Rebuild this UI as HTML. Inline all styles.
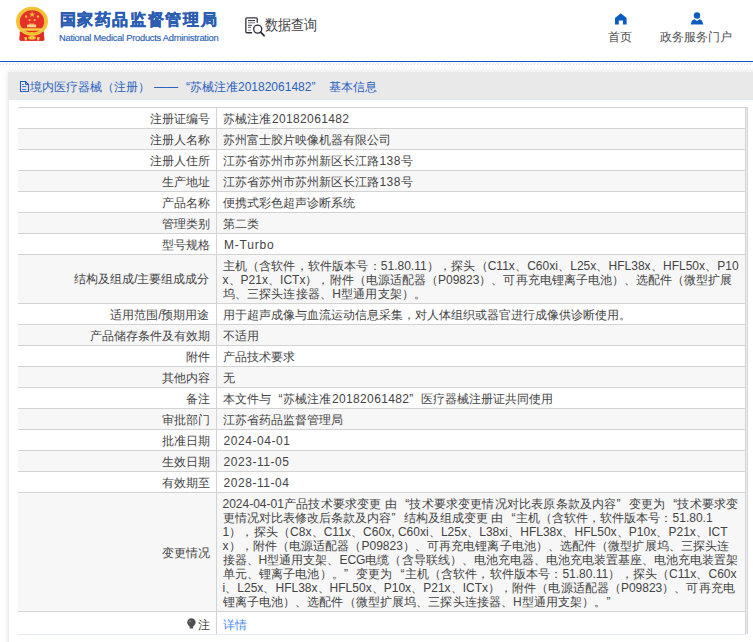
<!DOCTYPE html>
<html><head><meta charset="utf-8">
<style>
*{margin:0;padding:0;box-sizing:border-box}
html,body{width:753px;height:642px;overflow:hidden;background:#fff}
body{position:relative;font-family:"Liberation Sans",sans-serif;color:#555}
.abs{position:absolute;white-space:nowrap}
#title{left:59.5px;top:9.8px;font-size:15.8px;font-weight:bold;color:#2b5db3;-webkit-text-stroke:0.45px #2b5db3;letter-spacing:1.65px;line-height:20px}
#sub{left:59px;top:32.5px;font-size:9.3px;letter-spacing:-0.24px;color:#2c5fb6;-webkit-text-stroke:0.15px #2c5fb6;line-height:11px}
#dq{left:265px;top:16px;font-size:15px;transform:scaleX(0.875);transform-origin:0 0;color:#444;line-height:18px}
.nav{font-size:12px;color:#4a4a4a;line-height:14px}
#line{left:0;top:61px;width:753px;height:1px;background:#0a5cc2}
#panel{left:8px;top:72px;width:760px;height:600px;background:#fff;box-shadow:0 0 6px rgba(0,0,0,.12)}
#phead{left:0;top:0;width:100%;height:28px;background:#e9e9e9;border-bottom:1px solid #e4e8f3}
.pt{left:22px;top:7px;font-size:12px;color:#2b62c0;line-height:16px}
table{position:absolute;left:10px;top:35px;border-collapse:collapse;width:728px;font-size:12px;line-height:14px;color:#444}
td{border:1px solid #d3d3d3;padding:4px 0 2px;vertical-align:middle}
td.l{text-align:right;width:198px;padding-right:6px;border-left:none}
td.v{padding-left:6px;white-space:nowrap}
tr:nth-child(even) td{background:#f7f7f7}
.ln{white-space:nowrap;text-align-last:justify}
.qo{display:inline-block;width:12px;text-align:right;text-align-last:right}
.qc{display:inline-block;width:12px;text-align:left;text-align-last:left}
tr.last td{height:23px;padding-top:5px;padding-bottom:1px;border-bottom-color:#e6eaf5}
#rb1{left:738px;top:35px;width:1px;height:527px;background:#eceef4}
#rb2{left:739px;top:35px;width:1px;height:527px;background:#d4d4d8}
#tb{left:730px;top:35px;width:10px;height:1px;background:#d3d3d3}
</style></head><body>

<svg class="abs" style="left:0;top:0" width="60" height="45" viewBox="0 0 60 45">
 <path d="M19.8 31.5 L19.6 39.5 Q19.8 40.8 21.5 40.8 L42.5 40.8 Q44.2 40.8 44.2 39.5 L43.8 31.5Z" fill="#e42a24"/>
 <ellipse cx="32" cy="21.3" rx="16" ry="14.6" fill="#f4c234"/>
 <ellipse cx="32" cy="21.4" rx="12.2" ry="11.2" fill="#e6302a"/>
 <path d="M21 28.3H43V30.7H21Z" fill="#f7d044"/>
 <path d="M27 24.6H36.2V27.3H27Z" fill="#f6d985"/>
 <path d="M29 23.6H34.2V24.8H29Z" fill="#f2c86a"/>
 <ellipse cx="32" cy="33.6" rx="2.2" ry="1.5" fill="#f4c234"/>
 <path d="M19.6 36 L44.2 36 L44.2 39.5 Q44.2 40.8 42.5 40.8 L21.5 40.8 Q19.6 40.8 19.6 39.5Z" fill="#e42a24"/>
 <ellipse cx="32" cy="37.8" rx="3.8" ry="1.9" fill="#f4c83c"/>
 <path d="M24.3 37 L27.2 37.6 L26.5 40.5 L25 40.5Z M39.7 37 L36.8 37.6 L37.5 40.5 L39 40.5Z" fill="#f6d45a"/>
 <path d="M32.1 11.6L32.9 13.5L35 13.6L33.4 14.9L34 16.9L32.1 15.8L30.2 16.9L30.8 14.9L29.2 13.6L31.3 13.5Z" fill="#f4c234"/>
 <circle cx="26.1" cy="16.5" r="1.2" fill="#f4c234"/>
 <circle cx="38" cy="16.5" r="1.2" fill="#f4c234"/>
 <circle cx="29.6" cy="20.1" r="1.1" fill="#f4c234"/>
 <circle cx="34.6" cy="20.1" r="1.1" fill="#f4c234"/>
</svg>
<div id="title" class="abs">国家药品监督管理局</div>
<div id="sub" class="abs">National Medical Products Administration</div>

<svg class="abs" style="left:242px;top:14px" width="26" height="24" viewBox="0 0 26 24">
 <path d="M10.1 18.75H4.85Q3.85 18.75 3.85 17.75V4.85Q3.85 3.85 4.85 3.85H14.25Q15.25 3.85 15.25 4.85V8.8" fill="none" stroke="#33333f" stroke-width="1.3"/>
 <path d="M6 6.5H13" stroke="#3a3a48" stroke-width="1"/>
 <path d="M6 8.6H13" stroke="#9a9aa2" stroke-width="1.6"/>
 <path d="M6 11.3H10" stroke="#3a3a48" stroke-width="1"/>
 <path d="M6 13.3H9" stroke="#55555f" stroke-width="1"/>
 <path d="M6 16.2H9" stroke="#9a9aa2" stroke-width="1"/>
 <circle cx="15.7" cy="15.1" r="4.05" fill="#fff" stroke="#2a2a38" stroke-width="1.3"/>
 <path d="M18.6 18.1L22.1 21.7" stroke="#2a2a38" stroke-width="1.8" stroke-linecap="round"/>
</svg>
<div id="dq" class="abs">数据查询</div>

<svg class="abs" style="left:614.5px;top:12.5px" width="12" height="12" viewBox="0 0 12 12">
 <path d="M0 5L5.8 0.3L11.6 5V11.5H8V7.5H3.8V11.5H0Z" fill="#0a5cc2"/>
</svg>
<div class="abs nav" style="left:608px;top:30px">首页</div>
<svg class="abs" style="left:690px;top:11px" width="14" height="14" viewBox="0 0 14 14">
 <circle cx="7" cy="4.5" r="3.2" fill="#0a5cc2"/>
 <path d="M0.8 13.5Q1.5 8.5 4.5 8.2L7 10L9.5 8.2Q12.5 8.5 13.2 13.5Z" fill="#0a5cc2"/>
</svg>
<div class="abs nav" style="left:660px;top:30px">政务服务门户</div>

<div id="line" class="abs"></div>
<svg class="abs" style="left:0;top:63px" width="753" height="2"><defs><pattern id="hp" width="3" height="2" patternUnits="userSpaceOnUse"><rect x="0" y="1" width="1" height="1" fill="#e2e2e2"/><rect x="1" y="0" width="1" height="1" fill="#e2e2e2"/></pattern></defs><rect width="753" height="2" fill="url(#hp)"/></svg>

<div id="panel" class="abs">
 <div id="phead" class="abs"></div><div class="abs" style="left:0;top:28px;width:1px;height:600px;background:#ededed"></div>
 <svg class="abs" style="left:11px;top:8px" width="12" height="13" viewBox="0 0 12 13">
  <path d="M1.5 1.5H6.5L9.5 4.5V11.5H1.5Z" fill="none" stroke="#1f5fc6" stroke-width="1.1"/>
  <path d="M6.5 1.5V4.5H9.5" fill="none" stroke="#1f5fc6" stroke-width="1"/>
  <path d="M3 4.5H4.8M3 6.6H7.2M3 9.5H7.2" stroke="#3a64c0" stroke-width="0.9"/>
 </svg>
 <div class="abs pt" style="left:22px">境内医疗器械</div><div class="abs pt" style="left:94px">（注册）</div><div class="abs pt" style="left:146px">——</div><div class="abs pt" style="left:178px">“苏械注准20182061482”</div><div class="abs pt" style="left:321px">基本信息</div>
 <table>
  <tr><td class="l">注册证编号</td><td class="v">苏械注准<span style="margin-left:1.5px;letter-spacing:0.35px">20182061482</span></td></tr>
  <tr><td class="l">注册人名称</td><td class="v">苏州富士胶片映像机器有限公司</td></tr>
  <tr><td class="l">注册人住所</td><td class="v">江苏省苏州市苏州新区长江路<span style="margin-left:1px;letter-spacing:0.4px">138</span>号</td></tr>
  <tr><td class="l">生产地址</td><td class="v">江苏省苏州市苏州新区长江路<span style="margin-left:1px;letter-spacing:0.4px">138</span>号</td></tr>
  <tr><td class="l">产品名称</td><td class="v">便携式彩色超声诊断系统</td></tr>
  <tr><td class="l">管理类别</td><td class="v">第二类</td></tr>
  <tr><td class="l">型号规格</td><td class="v" style="letter-spacing:0.8px;padding-left:7.5px">M-Turbo</td></tr>
  <tr><td class="l" style="padding-top:3px;padding-bottom:3px">结构及组成/主要组成成分</td><td class="v"><div class="ln" style="width:516.2px">主机（含软件，软件版本号：51.80.11），探头（C11x、C60xi、L25x、HFL38x、HFL50x、P10</div><div class="ln" style="width:509.9px">x、P21x、ICTx），附件（电源适配器（P09823）、可再充电锂离子电池）、选配件（微型扩展</div><div class="ln" style="width:203.7px">坞、三探头连接器、H型通用支架）。</div></td></tr>
  <tr><td class="l">适用范围/预期用途</td><td class="v">用于超声成像与血流运动信息采集，对人体组织或器官进行成像供诊断使用。</td></tr>
  <tr><td class="l">产品储存条件及有效期</td><td class="v">不适用</td></tr>
  <tr><td class="l">附件</td><td class="v">产品技术要求</td></tr>
  <tr><td class="l">其他内容</td><td class="v">无</td></tr>
  <tr><td class="l">备注</td><td class="v">本文件与<span class="qo">“</span>苏械注准<span style="margin-left:1.5px;letter-spacing:0.35px">20182061482</span><span class="qc">”</span>医疗器械注册证共同使用</td></tr>
  <tr><td class="l">审批部门</td><td class="v">江苏省药品监督管理局</td></tr>
  <tr><td class="l">批准日期</td><td class="v" style="letter-spacing:0.55px;padding-left:7px">2024-04-01</td></tr>
  <tr><td class="l">生效日期</td><td class="v" style="letter-spacing:0.55px;padding-left:7px">2023-11-05</td></tr>
  <tr><td class="l">有效期至</td><td class="v" style="letter-spacing:0.55px;padding-left:7px">2028-11-04</td></tr>
  <tr><td class="l">变更情况</td><td class="v"><div class="ln" style="width:515.6px">2024-04-01产品技术要求变更 由<span class="qo">“</span>技术要求变更情况对比表原条款及内容<span class="qc">”</span>变更为<span class="qo">“</span>技术要求变</div><div class="ln" style="width:490.1px">更情况对比表修改后条款及内容<span class="qc">”</span>结构及组成变更 由<span class="qo">“</span>主机（含软件，软件版本号：51.80.1</div><div class="ln" style="width:505.0px">1），探头（C8x、C11x、C60x, C60xi、L25x、L38xi、HFL38x、HFL50x、P10x、P21x、ICT</div><div class="ln" style="width:506.5px">x），附件（电源适配器（P09823）、可再充电锂离子电池）、选配件（微型扩展坞、三探头连</div><div class="ln" style="width:515.7px">接器、H型通用支架、ECG电缆（含导联线）、电池充电器、电池充电装置基座、电池充电装置架</div><div class="ln" style="width:514.0px">单元、锂离子电池）。<span class="qc">”</span>变更为<span class="qo">“</span>主机（含软件，软件版本号：51.80.11），探头（C11x、C60x</div><div class="ln" style="width:512.2px">i、L25x、HFL38x、HFL50x、P10x、P21x、ICTx），附件（电源适配器（P09823）、可再充电</div><div class="ln" style="width:396.1px">锂离子电池）、选配件（微型扩展坞、三探头连接器、H型通用支架）。<span class="qc">”</span></div></td></tr>
  <tr class="last"><td class="l"><svg width="9" height="12" viewBox="0 0 9 12" style="vertical-align:-1px;margin-right:2px"><circle cx="4.4" cy="4.4" r="4.2" fill="#505050"/><path d="M2.6 8H6.2V10.5H2.6Z" fill="#505050"/><circle cx="3" cy="3.2" r="1" fill="#888"/></svg>注</td><td class="v" style="color:#4a8af4">详情</td></tr>
 </table>
 <div id="rb1" class="abs"></div><div id="rb2" class="abs"></div><div id="tb" class="abs"></div>
</div>
</body></html>
